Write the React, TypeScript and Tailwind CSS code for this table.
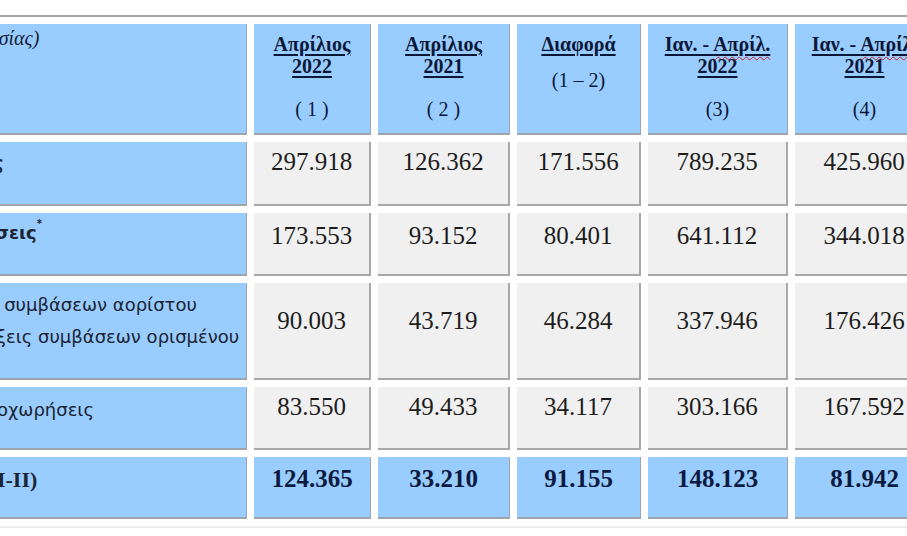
const serif = "font-['Liberation_Serif','Times_New_Roman',serif]";
const sans = "font-['DejaVu_Sans','Verdana',sans-serif]";

const blue = "bg-[#99ccff] border-r border-b-2 border-r-[#9aa5b1] border-b-[#9ea4aa]";
const grey = "bg-[#f0f0f0] border-r-2 border-b-2 border-[#a8a8a8]";

type Row = { label: React.ReactNode; labelCls: string; values: string[]; pt: string; total?: boolean };

const rows: Row[] = [
	{
		label: <span className="font-bold">Ι. Προσλήψεις</span>,
		labelCls: `${sans} text-[18px] leading-[24px] pt-[9px] pl-[16px]`,
		values: ["297.918", "126.362", "171.556", "789.235", "425.960"],
		pt: "pt-[5px]",
	},
	{
		label: (
			<span className="font-bold">
				ΙΙ. Αποχωρήσεις<sup className="text-[10px] align-super">*</sup>
			</span>
		),
		labelCls: `${sans} text-[18px] leading-[24px] pt-[8px] pl-[28px]`,
		values: ["173.553", "93.152", "80.401", "641.112", "344.018"],
		pt: "pt-[8px]",
	},
	{
		label: (
			<>
				Καταγγελίες συμβάσεων αορίστου
				<br />
				χρόνου &amp; λήξεις συμβάσεων ορισμένου
				<br />
				χρόνου
			</>
		),
		labelCls: `${sans} text-[18px] leading-[32px] pt-[6px] pl-[37px]`,
		values: ["90.003", "43.719", "46.284", "337.946", "176.426"],
		pt: "pt-[23px]",
	},
	{
		label: <>Οικειοθελείς αποχωρήσεις</>,
		labelCls: `${sans} text-[18px] leading-[24px] pt-[11px] pl-[6px]`,
		values: ["83.550", "49.433", "34.117", "303.166", "167.592"],
		pt: "pt-[5px]",
	},
	{
		label: <span className="font-bold">Ισοζύγιο (I-II)</span>,
		labelCls: `${serif} text-[22px] leading-[28px] pt-[9px] pl-[57px] text-[#0b1838]`,
		values: ["124.365", "33.210", "91.155", "148.123", "81.942"],
		pt: "pt-[7px]",
		total: true,
	},
];

function HeadCell({ top, year, note }: { top: React.ReactNode; year?: string; note: string }) {
	return (
		<div className={`${blue} ${serif} text-center text-[20px] leading-[22px] pt-[9px] text-[#0b1736]`}>
			<div className="font-bold underline decoration-[1.5px] underline-offset-[3px] whitespace-nowrap">{top}</div>
			{year ? (
				<>
					<div className="font-bold underline decoration-[1.5px] underline-offset-[3px]">{year}</div>
					<div className="mt-[21px]">{note}</div>
				</>
			) : (
				<div className="mt-[14px]">{note}</div>
			)}
		</div>
	);
}

function Wavy({ children }: { children: React.ReactNode }) {
	return <span className="underline decoration-wavy decoration-[#d42020] decoration-1 underline-offset-[5px]">{children}</span>;
}

export default function App() {
	return (
		<div className="h-[536px] w-[907px] overflow-hidden bg-white pt-[15px]">
			<div className="-ml-[160px] w-max border-t-2 border-b-2 border-t-[#a4a4a4] border-b-[#ededed] py-[7px] px-[7px]">
				<div className="grid grid-cols-[400px_117px_132px_124px_140px_140px] grid-rows-[111px_64px_63px_97px_63px_62px] gap-[7px]">
					<div className={`${blue} ${serif} italic text-[20px] leading-[24px] pt-[2px] pl-[55px] text-[#15203a] whitespace-nowrap`}>
						(θέσεις εργασίας)
					</div>
					<HeadCell top="Απρίλιος" year="2022" note="( 1 )" />
					<HeadCell top="Απρίλιος" year="2021" note="( 2 )" />
					<HeadCell top="Διαφορά" note="(1 – 2)" />
					<HeadCell
						top={
							<>
								Ιαν. - <Wavy>Απρίλ.</Wavy>
							</>
						}
						year="2022"
						note="(3)"
					/>
					<HeadCell
						top={
							<>
								Ιαν. - <Wavy>Απρίλ.</Wavy>
							</>
						}
						year="2021"
						note="(4)"
					/>

					{rows.map((r, i) => (
						<div key={i} className="contents">
							<div className={`${blue} ${r.labelCls} whitespace-nowrap text-[#1c2433]`}>{r.label}</div>
							{r.values.map((v) => (
								<div
									key={v}
									className={`${r.total ? blue : grey} ${serif} ${r.pt} text-center text-[25px] leading-[30px] ${
										r.total ? "font-bold text-[#0b1a3e]" : "text-[#1d1d1d]"
									}`}
								>
									{v}
								</div>
							))}
						</div>
					))}
				</div>
			</div>
		</div>
	);
}
